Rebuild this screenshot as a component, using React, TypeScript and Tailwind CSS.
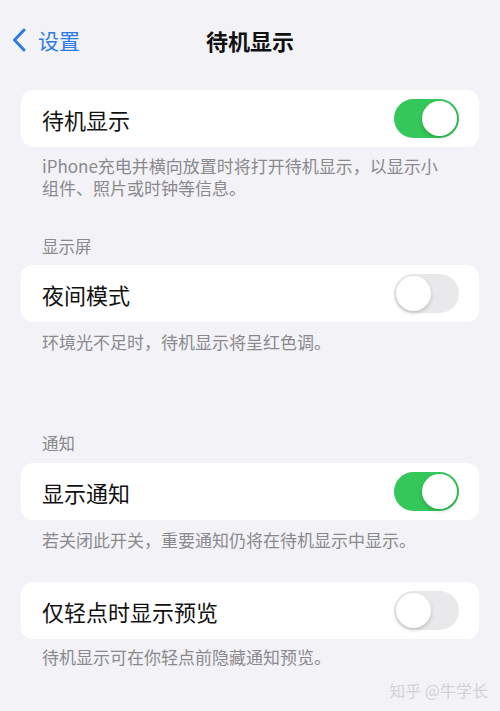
import React from "react";

const font = { fontFamily: '"Noto Sans CJK SC", "Noto Sans", sans-serif' };

interface ToggleProps {
  on: boolean;
}

const Toggle: React.FC<ToggleProps> = ({ on }) => {
  return (
    <div
      className={
        on
          ? "w-[65px] h-[39px] rounded-full bg-[#34c759] p-[2px] flex justify-end"
          : "w-[65px] h-[39px] rounded-full bg-[#e9e9eb] p-[2px] flex justify-start"
      }>
      <div className="w-[35px] h-[35px] rounded-full bg-white shadow-[0_2px_4px_rgba(0,0,0,0.18)]" />
    </div>
  );
};

interface RowProps {
  label: string;
  on: boolean;
}

const Row: React.FC<RowProps> = ({ label, on }) => {
  return (
    <div className="mx-[21px] h-[57px] rounded-[12px] bg-white flex items-center justify-between pl-[21px] pr-[20px]">
      <span className="text-[22px] leading-[28px] text-[#111111]">{label}</span>
      <Toggle on={on} />
    </div>
  );
};

const Note = ({ children, className = "" }: { children: React.ReactNode; className?: string }) => (
  <p className={"pl-[42px] pr-[58px] text-[17px] leading-[22px] text-[#8a8a8e] " + className}>{children}</p>
);

const Header = ({ children, className = "" }: { children: React.ReactNode; className?: string }) => (
  <h3 className={"pl-[42px] text-[16.5px] leading-[22px] text-[#8a8a8e] " + className}>{children}</h3>
);

export default function App() {
  return (
    <div className="min-h-[711px] w-full bg-[#f2f2f7] overflow-hidden" style={font}>
      {/* nav bar */}
      <div className="h-[80px] grid grid-cols-[1fr_auto_1fr] items-center">
        <div className="flex items-center pl-[12px] gap-[12px] text-[#2b7be6]">
          <svg width="14" height="24" viewBox="0 0 14 24" fill="none">
            <path d="M12 2 L2.5 12 L12 22" stroke="currentColor" strokeWidth="3" strokeLinecap="round" strokeLinejoin="round" />
          </svg>
          <span className="text-[21px] leading-[28px]">设置</span>
        </div>
        <h1 className="text-[22px] leading-[28px] font-bold text-[#111111]">待机显示</h1>
        <div />
      </div>

      <div className="mt-[10px]">
        <Row label="待机显示" on={true} />
        <Note className="mt-[8px]">iPhone充电并横向放置时将打开待机显示，以显示小组件、照片或时钟等信息。</Note>

        <Header className="mt-[36px]">显示屏</Header>
        <div className="mt-[8px]">
          <Row label="夜间模式" on={false} />
        </div>
        <Note className="mt-[9px]">环境光不足时，待机显示将呈红色调。</Note>

        <Header className="mt-[79px]">通知</Header>
        <div className="mt-[9px]">
          <Row label="显示通知" on={true} />
        </div>
        <Note className="mt-[9px]">若关闭此开关，重要通知仍将在待机显示中显示。</Note>

        <div className="mt-[31px]">
          <Row label="仅轻点时显示预览" on={false} />
        </div>
        <Note className="mt-[7px]">待机显示可在你轻点前隐藏通知预览。</Note>

        <div className="mt-[11px] pr-[12px] flex justify-end">
          <span className="text-[16px] leading-[22px] text-[#d2d2d6]">知乎 @牛学长</span>
        </div>
      </div>
    </div>
  );
}
